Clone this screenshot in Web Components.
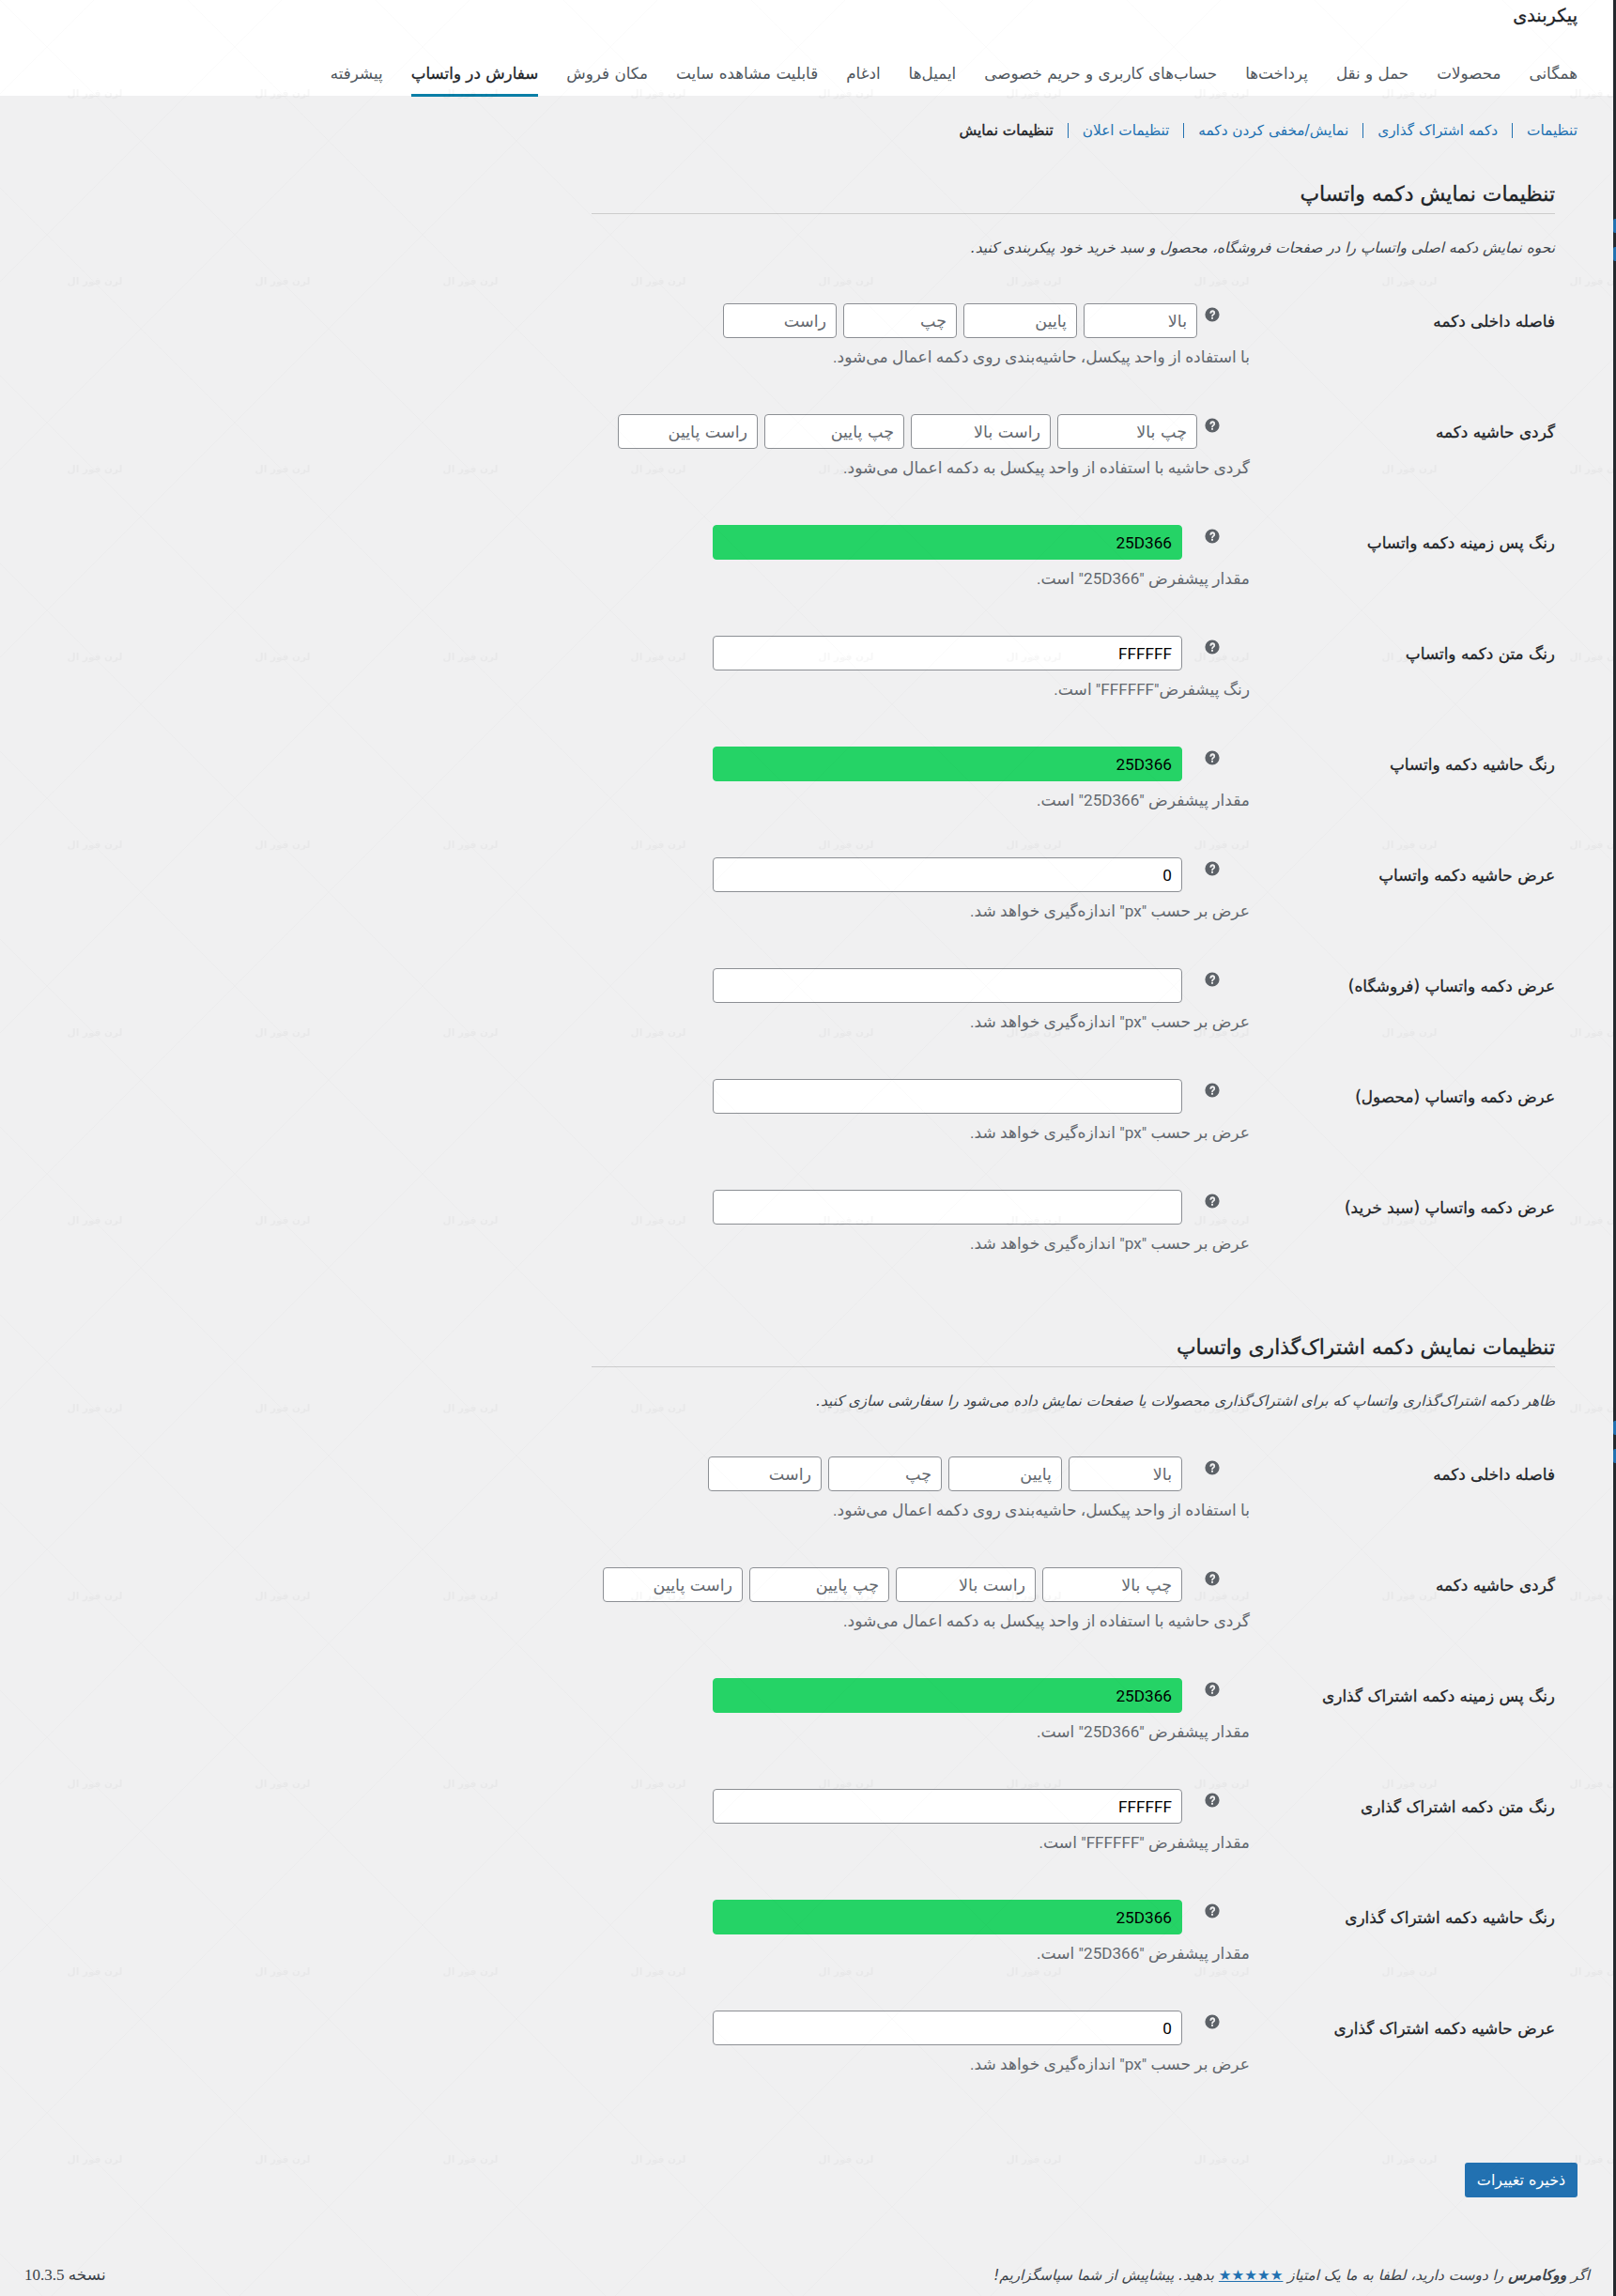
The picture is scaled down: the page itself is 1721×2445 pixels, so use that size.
<!DOCTYPE html>
<html lang="fa" dir="rtl">
<head>
<meta charset="utf-8">
<title>پیکربندی</title>
<style>
  html, body { margin: 0; padding: 0; }
  body { background: #f0f0f1; color: #3c434a; font-family: "DejaVu Sans", "Noto Sans", sans-serif; }
</style>
</head>
<body>
<wc-page>
  <wc-topbar title-text="پیکربندی" active="سفارش در واتساپ"
    tabs="همگانی|محصولات|حمل و نقل|پرداخت‌ها|حساب‌های کاربری و حریم خصوصی|ایمیل‌ها|ادغام|قابلیت مشاهده سایت|مکان فروش|سفارش در واتساپ|پیشرفته"></wc-topbar>
  <wc-subnav current="تنظیمات نمایش" links="تنظیمات|دکمه اشتراک گذاری|نمایش/مخفی کردن دکمه|تنظیمات اعلان"></wc-subnav>

  <wc-section heading="تنظیمات نمایش دکمه واتساپ" desc="نحوه نمایش دکمه اصلی واتساپ را در صفحات فروشگاه، محصول و سبد خرید خود پیکربندی کنید.">
    <wc-row label="فاصله داخلی دکمه" note="با استفاده از واحد پیکسل، حاشیه‌بندی روی دکمه اعمال می‌شود." parts="بالا|پایین|چپ|راست" part-width="121" inset="8"></wc-row>
    <wc-row label="گردی حاشیه دکمه" note="گردی حاشیه با استفاده از واحد پیکسل به دکمه اعمال می‌شود." parts="چپ بالا|راست بالا|چپ پایین|راست پایین" part-width="149" inset="8"></wc-row>
    <wc-row label="رنگ پس زمینه دکمه واتساپ" note="مقدار پیشفرض &quot;25D366&quot; است." value="25D366" fill="#25d366"></wc-row>
    <wc-row label="رنگ متن دکمه واتساپ" note="رنگ پیشفرض&quot;FFFFFF&quot; است." value="FFFFFF"></wc-row>
    <wc-row label="رنگ حاشیه دکمه واتساپ" note="مقدار پیشفرض &quot;25D366&quot; است." value="25D366" fill="#25d366"></wc-row>
    <wc-row label="عرض حاشیه دکمه واتساپ" note="عرض بر حسب &quot;px&quot; اندازه‌گیری خواهد شد." value="0"></wc-row>
    <wc-row label="عرض دکمه واتساپ (فروشگاه)" note="عرض بر حسب &quot;px&quot; اندازه‌گیری خواهد شد." value=""></wc-row>
    <wc-row label="عرض دکمه واتساپ (محصول)" note="عرض بر حسب &quot;px&quot; اندازه‌گیری خواهد شد." value=""></wc-row>
    <wc-row label="عرض دکمه واتساپ (سبد خرید)" note="عرض بر حسب &quot;px&quot; اندازه‌گیری خواهد شد." value=""></wc-row>
  </wc-section>

  <wc-section class="second" heading="تنظیمات نمایش دکمه اشتراک‌گذاری واتساپ" desc="ظاهر دکمه اشتراک‌گذاری واتساپ که برای اشتراک‌گذاری محصولات یا صفحات نمایش داده می‌شود را سفارشی سازی کنید.">
    <wc-row label="فاصله داخلی دکمه" note="با استفاده از واحد پیکسل، حاشیه‌بندی روی دکمه اعمال می‌شود." parts="بالا|پایین|چپ|راست" part-width="121" inset="24"></wc-row>
    <wc-row label="گردی حاشیه دکمه" note="گردی حاشیه با استفاده از واحد پیکسل به دکمه اعمال می‌شود." parts="چپ بالا|راست بالا|چپ پایین|راست پایین" part-width="149" inset="24"></wc-row>
    <wc-row label="رنگ پس زمینه دکمه اشتراک گذاری" note="مقدار پیشفرض &quot;25D366&quot; است." value="25D366" fill="#25d366"></wc-row>
    <wc-row label="رنگ متن دکمه اشتراک گذاری" note="مقدار پیشفرض &quot;FFFFFF&quot; است." value="FFFFFF"></wc-row>
    <wc-row label="رنگ حاشیه دکمه اشتراک گذاری" note="مقدار پیشفرض &quot;25D366&quot; است." value="25D366" fill="#25d366"></wc-row>
    <wc-row label="عرض حاشیه دکمه اشتراک گذاری" note="عرض بر حسب &quot;px&quot; اندازه‌گیری خواهد شد." value="0"></wc-row>
  </wc-section>

  <wc-footer></wc-footer>
</wc-page>

<script>
// ستون‌ها و اندازه‌ها از روی تصویر مرجع خوانده شده‌اند
const FONT = '"DejaVu Sans", "Noto Sans", sans-serif';
const LATIN = 'Roboto, "DejaVu Sans", sans-serif';

class WcPage extends HTMLElement {
  constructor() {
    super();
    this.attachShadow({ mode: 'open' });
    // watermark tile: 200px lattice of faint diagonals plus the small stamp
    const tile = `<svg xmlns="http://www.w3.org/2000/svg" width="100%" height="100%"><defs>
      <pattern id="wm" width="200" height="200" patternUnits="userSpaceOnUse">
        <path d="M0 0L200 200M100 0L0 100M200 100L100 200" stroke="#000" stroke-opacity=".014" stroke-width="1" fill="none"/>
        <text x="101" y="103" text-anchor="middle" direction="rtl" font-size="10.5" font-weight="bold" font-family="DejaVu Sans" fill="#000" fill-opacity=".03">لرن فور ال</text>
      </pattern></defs><rect width="100%" height="100%" fill="url(#wm)"/></svg>`;
    this.shadowRoot.innerHTML = `
      <style>
        :host { display: block; position: relative; height: 2445px; overflow: hidden; }
        .wm { position: absolute; inset: 0; pointer-events: none; z-index: 3; }
        .strip { position: absolute; top: 0; right: 0; bottom: 0; width: 3.5px; background: #23282d; z-index: 4; }
        .strip i { position: absolute; right: 0; width: 3.5px; height: 15px; background: #2271b1; border-radius: 2px 0 0 2px; }
      </style>
      <slot></slot>
      <div class="wm">${tile}</div>
      <div class="strip"><i style="top:233px"></i><i style="top:263px"></i><i style="top:1513px"></i><i style="top:1543px"></i></div>
    `;
  }
}

class WcTopbar extends HTMLElement {
  constructor() {
    super();
    this.attachShadow({ mode: 'open' });
  }
  connectedCallback() {
    const active = this.getAttribute('active');
    const tabs = this.getAttribute('tabs').split('|').map(t =>
      `<a class="${t === active ? 'on' : ''}">${t}</a>`).join('');
    this.shadowRoot.innerHTML = `
      <style>
        :host { display: block; background: #fff; height: 102px; padding: 0 41px 0 0; box-sizing: border-box; }
        h1 { margin: 0; padding-top: 4px; font: 400 19.3px/26px ${FONT}; -webkit-text-stroke: .3px; color: #1d2327; height: 60px; box-sizing: border-box; }
        nav { display: flex; gap: 30px; height: 42px; }
        a { font: 16.75px/36px ${FONT}; color: #50575e; white-space: nowrap; height: 43px; box-sizing: border-box; }
        a.on { color: #1d2327; -webkit-text-stroke: .3px #1d2327; border-bottom: 3px solid #0a7ea6; }
      </style>
      <h1>${this.getAttribute('title-text')}</h1>
      <nav>${tabs}</nav>
    `;
  }
}

class WcSubnav extends HTMLElement {
  constructor() {
    super();
    this.attachShadow({ mode: 'open' });
  }
  connectedCallback() {
    const links = this.getAttribute('links').split('|').map(t => `<a>${t}</a><s></s>`).join('');
    this.shadowRoot.innerHTML = `
      <style>
        :host { display: flex; align-items: center; height: 74px; padding: 0 41px 0 0; font: 15.3px/20px ${FONT}; }
        a { color: #2271b1; white-space: nowrap; }
        s { width: 1px; height: 16px; background: #2271b1; margin: 0 15px; }
        b { font-weight: 400; -webkit-text-stroke: .4px #1d2327; color: #1d2327; white-space: nowrap; }
      </style>
      ${links}<b>${this.getAttribute('current')}</b>
    `;
  }
}

class WcSection extends HTMLElement {
  constructor() {
    super();
    this.attachShadow({ mode: 'open' });
  }
  connectedCallback() {
    this.shadowRoot.innerHTML = `
      <style>
        :host { display: block; padding: 0 65px 0 0; }
        :host(.second) { margin-top: 20px; }
        header { width: 1026px; border-bottom: 1px solid #ccc; height: 52px; box-sizing: border-box; }
        h2 { margin: 0; font: 400 21.9px/26px ${FONT}; -webkit-text-stroke: .35px #1d2327; color: #1d2327; padding-top: 18px; white-space: nowrap; }
        p { margin: 0; font: italic 15.4px/20px ${FONT}; color: #3c434a; padding-top: 26px; height: 94px; box-sizing: border-box; white-space: nowrap; }
      </style>
      <header><h2>${this.getAttribute('heading')}</h2></header>
      <p>${this.getAttribute('desc')}</p>
      <slot></slot>
    `;
  }
}

class WcRow extends HTMLElement {
  constructor() {
    super();
    this.attachShadow({ mode: 'open' });
  }
  connectedCallback() {
    const parts = this.getAttribute('parts');
    const inset = this.getAttribute('inset') || 24;
    const width = this.getAttribute('part-width');
    let field;
    if (parts) {
      field = parts.split('|').map(p => `<input placeholder="${p}" style="width:${width}px">`).join('');
    } else {
      const fill = this.getAttribute('fill');
      field = `<input class="txt" value="${this.getAttribute('value') || ''}"${fill ? ` style="background:${fill};border-color:${fill}"` : ''}>`;
    }
    this.shadowRoot.innerHTML = `
      <style>
        :host { display: grid; grid-template-columns: 325px 1fr; height: 118px; align-items: start; }
        .label { font: 400 16.9px/20px ${FONT}; -webkit-text-stroke: .3px #1d2327; color: #1d2327; padding-top: 10px; white-space: nowrap; }
        .line { display: flex; align-items: flex-start; height: 38px; padding-top: 1px; box-sizing: border-box; }
        .help { flex: none; width: 16px; height: 16px; margin: 4px 32px 0 ${inset}px; color: #5c6167; display: block; }
        .fields { display: flex; gap: 7px; }
        input { box-sizing: border-box; height: 37px; padding: 0 10px; margin: 0; border: 1px solid #8c8f94; border-radius: 4px; background: #fff; font: 17.2px ${LATIN}; color: #000; direction: rtl; text-align: right; outline: none; }
        input::placeholder { color: #646970; opacity: 1; font: 17.5px ${FONT}; }
        input.txt { width: 500px; direction: ltr; }
        .note { font: 17.1px/20px ${LATIN}; color: #646970; margin-top: 10px; white-space: nowrap; }
      </style>
      <div class="label">${this.getAttribute('label')}</div>
      <div>
        <div class="line">
          <svg class="help" viewBox="0 0 20 20"><path fill="currentColor" fill-rule="evenodd" d="M10 .5a9.500 9.500 0 1 0 0 19 9.500 9.500 0 0 0 0-19zm1.200 15.300H8.800v-2.300h2.400zM13.700 9c-.4.700-1 1.100-1.500 1.500-.6.400-.9.700-1 1-.1.300-.1.500-.1.900H9c0-.8.100-1.400.4-1.900.3-.5.800-.9 1.400-1.300.4-.3.700-.6.800-.9.100-.3.100-.5 0-.7-.2-.4-.6-.6-1.200-.6-.8 0-1.300.5-1.400 1.400H6.700C6.800 5.400 8.200 4 10.300 4c1.500 0 2.800.7 3.300 1.800.4 1 .4 2.200.1 3.200z"/></svg>
          <div class="fields">${field}</div>
        </div>
        <div class="note">${this.getAttribute('note')}</div>
      </div>
    `;
  }
}

class WcFooter extends HTMLElement {
  constructor() {
    super();
    this.attachShadow({ mode: 'open' });
  }
  connectedCallback() {
    this.shadowRoot.innerHTML = `
      <style>
        :host { display: block; padding: 45px 41px 0 0; }
        .save { display: flex; }
        button { width: 120px; height: 37px; border: 0; border-radius: 3px; background: #2271b1; color: #fff; font: 16px ${FONT}; padding: 0; }
        .bar { display: flex; justify-content: space-between; align-items: center; margin: 71px -13px 0 0; padding-left: 26px; height: 24px; }
        .thanks { font: italic 15.3px/20px ${FONT}; color: #3c434a; }
        .thanks a { color: #2271b1; text-decoration: underline; }
        .ver { font: 17px/20px "Liberation Serif", ${FONT}; color: #3c434a; }
      </style>
      <div class="save"><button>ذخیره تغییرات</button></div>
      <div class="bar">
        <span class="thanks">اگر <b>ووکامرس</b> را دوست دارید، لطفا به ما یک امتیاز <a>★★★★★</a> بدهید. پیشاپیش از شما سپاسگزاریم!</span>
        <span class="ver">نسخه 10.3.5</span>
      </div>
    `;
  }
}

customElements.define('wc-page', WcPage);
customElements.define('wc-topbar', WcTopbar);
customElements.define('wc-subnav', WcSubnav);
customElements.define('wc-section', WcSection);
customElements.define('wc-row', WcRow);
customElements.define('wc-footer', WcFooter);
</script>
</body>
</html>
